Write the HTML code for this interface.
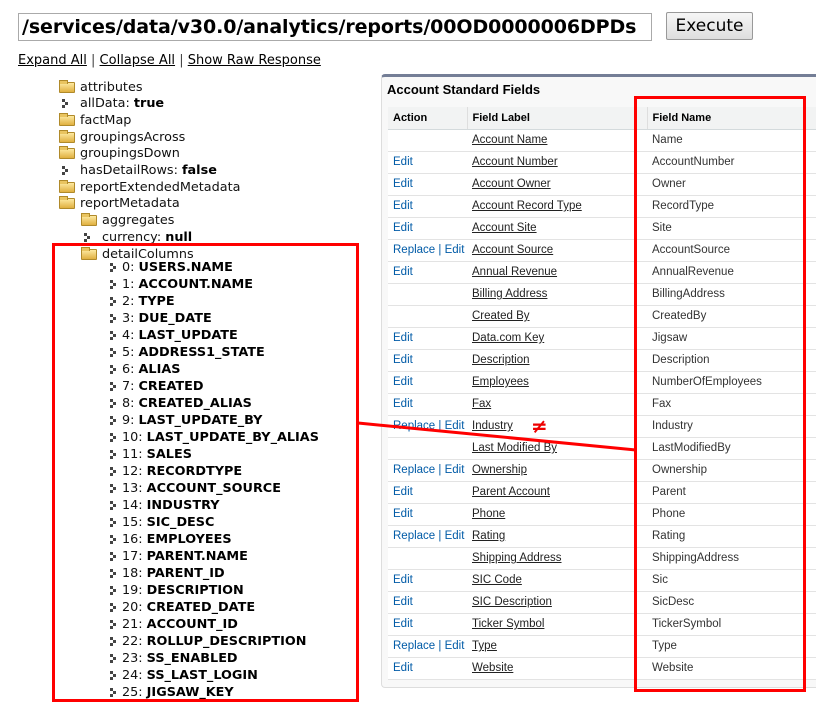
<!DOCTYPE html>
<html><head><meta charset="utf-8"><style>
*{margin:0;padding:0;box-sizing:border-box}
body{width:816px;height:706px;background:#fff;position:relative;overflow:hidden;font-family:"DejaVu Sans",Verdana,sans-serif;color:#000}
.abs{position:absolute;white-space:nowrap}
#url{left:18px;top:13px;width:634px;height:28px;border:1px solid #aaa;font-weight:bold;font-size:19px;letter-spacing:-0.1px;line-height:26px;padding-left:3px;overflow:hidden}
#btn{left:666px;top:12px;width:87px;height:28px;border:1px solid #999;border-radius:2px;background:linear-gradient(#f6f6f6,#dedede);font-size:17px;line-height:26px;text-align:center}
#links{left:18px;top:53px;font-size:13px}
#links a{color:#000;text-decoration:underline}
#links span{color:#444}
.t{font-size:12.8px;line-height:17px;height:17px;color:#111}
.t b{color:#000}
.fold{position:absolute;width:16px;height:11px;top:3px;background:linear-gradient(#fde9a0,#e0b040);border:1px solid #b08a2a;border-radius:1px}
.fold:before{content:"";position:absolute;left:-1px;top:-3px;width:7px;height:3px;background:#e9c460;border:1px solid #b08a2a;border-bottom:none}
.arr{position:absolute;width:6px;height:9px;top:4px}
.arr i{position:absolute;width:3px;height:3px;background:#444}
#panel{left:381px;top:74px;width:440px;height:614px;background:#f8f8f8;border-top:3px solid #747e96;border-left:1px solid #ddd;border-bottom:1px solid #ddd;border-radius:4px 0 0 4px}
#ttl{left:387px;top:82px;font-family:"Liberation Sans",Arial,sans-serif;font-weight:bold;font-size:13px}
table{position:absolute;left:388px;top:107px;width:430px;border-collapse:collapse;font-family:"Liberation Sans",Arial,sans-serif;font-size:11.5px;background:#fff}
td,th{height:22px;border-bottom:1px solid #e3e3e3;padding:0 0 0 5px;text-align:left;vertical-align:middle;white-space:nowrap}
th{background:#f2f3f3;font-size:11px;font-weight:bold;border-bottom:1px solid #d4dadc;border-left:1px solid #dedede;color:#000}
th:first-child{border-left:none}
td.a{color:#015ba7;width:79px}
td.l{width:180px;color:#222}
td.l u{color:#222}
td.n{color:#333}
.red{position:absolute;border:3px solid #f00}
</style></head><body>
<div id="url" class="abs">/services/data/v30.0/analytics/reports/00OD0000006DPDs</div>
<div id="btn" class="abs">Execute</div>
<div id="links" class="abs"><a>Expand All</a> <span>|</span> <a>Collapse All</a> <span>|</span> <a>Show Raw Response</a></div>

<div id="tree"></div>
<script>
var items=[[59,80,'f','attributes'],[59,80,'a','allData: <b>true</b>'],[59,80,'f','factMap'],[59,80,'f','groupingsAcross'],[59,80,'f','groupingsDown'],[59,80,'a','hasDetailRows: <b>false</b>'],[59,80,'f','reportExtendedMetadata'],[59,80,'f','reportMetadata'],[81,102,'f','aggregates'],[81,102,'a','currency: <b>null</b>'],[81,102,'f','detailColumns']];
var cols=['USERS.NAME','ACCOUNT.NAME','TYPE','DUE_DATE','LAST_UPDATE','ADDRESS1_STATE','ALIAS','CREATED','CREATED_ALIAS','LAST_UPDATE_BY','LAST_UPDATE_BY_ALIAS','SALES','RECORDTYPE','ACCOUNT_SOURCE','INDUSTRY','SIC_DESC','EMPLOYEES','PARENT.NAME','PARENT_ID','DESCRIPTION','CREATED_DATE','ACCOUNT_ID','ROLLUP_DESCRIPTION','SS_ENABLED','SS_LAST_LOGIN','JIGSAW_KEY'];
var h='';
items.forEach(function(it,i){var y=Math.round(78.5+i*16.7);add(it,y)});
cols.forEach(function(c,i){add([107,122,'a',i+': <b>'+c+'</b>'],259+i*17)});
function add(it,y){
 var ic=it[2]=='f'?'<div class="fold" style="left:'+it[0]+'px;top:'+(y+3)+'px"></div>':'<div class="arr" style="left:'+(it[0]+3)+'px;top:'+(y+4)+'px"><i style="left:0;top:0"></i><i style="left:3px;top:3px"></i><i style="left:0;top:6px"></i></div>';
 h+=ic+'<div class="abs t" style="left:'+it[1]+'px;top:'+y+'px">'+it[3]+'</div>';}
document.getElementById('tree').innerHTML=h;
</script>

<div id="panel" class="abs"></div>
<div id="ttl" class="abs">Account Standard Fields</div>
<table>
<tr><th>Action</th><th>Field Label</th><th>Field Name</th></tr>
<tbody id="tb"></tbody>
</table>
<script>
var rows=[['','Account Name','Name'],['Edit','Account Number','AccountNumber'],['Edit','Account Owner','Owner'],['Edit','Account Record Type','RecordType'],['Edit','Account Site','Site'],['Replace | Edit','Account Source','AccountSource'],['Edit','Annual Revenue','AnnualRevenue'],['','Billing Address','BillingAddress'],['','Created By','CreatedBy'],['Edit','Data.com Key','Jigsaw'],['Edit','Description','Description'],['Edit','Employees','NumberOfEmployees'],['Edit','Fax','Fax'],['Replace | Edit','Industry','Industry'],['','Last Modified By','LastModifiedBy'],['Replace | Edit','Ownership','Ownership'],['Edit','Parent Account','Parent'],['Edit','Phone','Phone'],['Replace | Edit','Rating','Rating'],['','Shipping Address','ShippingAddress'],['Edit','SIC Code','Sic'],['Edit','SIC Description','SicDesc'],['Edit','Ticker Symbol','TickerSymbol'],['Replace | Edit','Type','Type'],['Edit','Website','Website']];
var s='';rows.forEach(function(r){s+='<tr><td class="a">'+r[0]+'</td><td class="l"><u>'+r[1]+'</u></td><td class="n">'+r[2]+'</td></tr>'});
document.getElementById('tb').innerHTML=s;
</script>

<div class="red" style="left:52px;top:243px;width:307px;height:459px"></div>
<div class="red" style="left:634px;top:96px;width:172px;height:596px"></div>
<svg class="abs" style="left:0;top:0" width="816" height="706"><line x1="358" y1="423" x2="636" y2="450" stroke="#f00" stroke-width="3"/></svg>
<div class="abs" style="left:531px;top:414px;color:#e00;font-weight:bold;font-size:20px;font-family:'DejaVu Sans',sans-serif">≠</div>
</body></html>
